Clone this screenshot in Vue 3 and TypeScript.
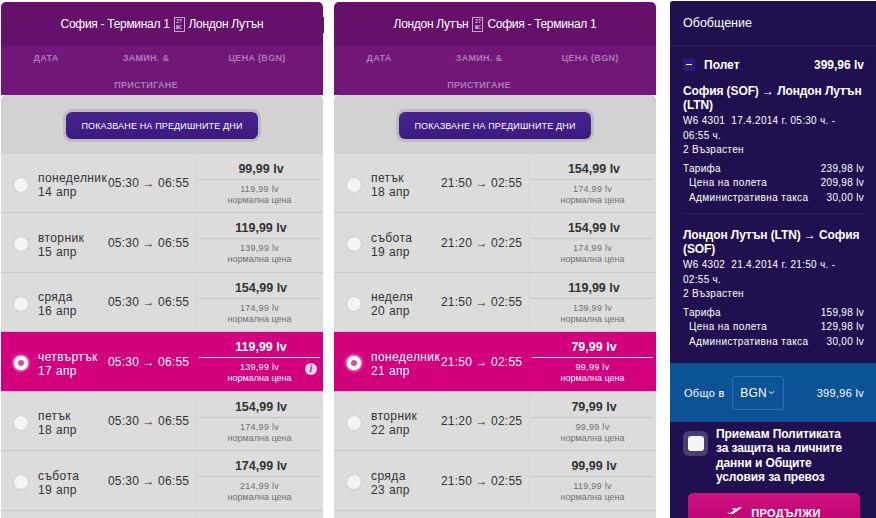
<script setup lang="ts">
interface Flight {
  day: string
  date: string
  dep: string
  arr: string
  price: string
  old: string
  selected?: boolean
  info?: boolean
}

interface Column {
  from: string
  to: string
  flights: Flight[]
}

const columns: Column[] = [
  {
    from: "София - Терминал 1",
    to: "Лондон Лутън",
    flights: [
      { day: "понеделник", date: "14 апр", dep: "05:30", arr: "06:55", price: "99,99", old: "119,99" },
      { day: "вторник", date: "15 апр", dep: "05:30", arr: "06:55", price: "119,99", old: "139,99" },
      { day: "сряда", date: "16 апр", dep: "05:30", arr: "06:55", price: "154,99", old: "174,99" },
      { day: "четвъртък", date: "17 апр", dep: "05:30", arr: "06:55", price: "119,99", old: "139,99", selected: true, info: true },
      { day: "петък", date: "18 апр", dep: "05:30", arr: "06:55", price: "154,99", old: "174,99" },
      { day: "събота", date: "19 апр", dep: "05:30", arr: "06:55", price: "174,99", old: "214,99" }
    ]
  },
  {
    from: "Лондон Лутън",
    to: "София - Терминал 1",
    flights: [
      { day: "петък", date: "18 апр", dep: "21:50", arr: "02:55", price: "154,99", old: "174,99" },
      { day: "събота", date: "19 апр", dep: "21:20", arr: "02:25", price: "154,99", old: "174,99" },
      { day: "неделя", date: "20 апр", dep: "21:50", arr: "02:55", price: "119,99", old: "139,99" },
      { day: "понеделник", date: "21 апр", dep: "21:50", arr: "02:55", price: "79,99", old: "99,99", selected: true },
      { day: "вторник", date: "22 апр", dep: "21:20", arr: "02:25", price: "79,99", old: "99,99" },
      { day: "сряда", date: "23 апр", dep: "21:50", arr: "02:55", price: "99,99", old: "119,99" }
    ]
  }
]

const legs = [
  {
    title: "София (SOF) → Лондон Лутън (LTN)",
    info: "W6 4301  17.4.2014 г. 05:30 ч. -\n06:55 ч.",
    fare: "239,98 lv",
    ticket: "209,98 lv"
  },
  {
    title: "Лондон Лутън (LTN) → София (SOF)",
    info: "W6 4302  21.4.2014 г. 21:50 ч. -\n02:55 ч.",
    fare: "159,98 lv",
    ticket: "129,98 lv"
  }
]
</script>

<template>
  <div class="page">
    <section v-for="col in columns" :key="col.from" class="column">
      <header class="route">
        <span>{{ col.from }}</span>
        <span class="missing">27<br />BC</span>
        <span>{{ col.to }}</span>
      </header>
      <div class="labels">
        <span>ДАТА</span>
        <span>ЗАМИН. &amp;</span>
        <span>ЦЕНА (BGN)</span>
        <span></span>
        <span>ПРИСТИГАНЕ</span>
      </div>
      <div class="panel">
        <div class="earlier">
          <button class="earlier-btn">ПОКАЗВАНЕ НА ПРЕДИШНИТЕ ДНИ</button>
        </div>
        <div
          v-for="f in col.flights"
          :key="f.date"
          class="row"
          :class="{ selected: f.selected }"
        >
          <span class="radio"><i v-if="f.selected"></i></span>
          <div class="date">{{ f.day }}<br />{{ f.date }}</div>
          <div class="times">{{ f.dep }} <span class="arrow">→</span> {{ f.arr }}</div>
          <div class="prices">
            <div class="price">{{ f.price }} lv</div>
            <div class="old">{{ f.old }} lv</div>
            <div class="normal">нормална цена</div>
            <span v-if="f.info" class="info">i</span>
          </div>
        </div>
        <!-- next row is cut off by the window -->
        <div class="row">
          <div class="row-spacer"></div>
          <div class="prices"></div>
        </div>
      </div>
    </section>

    <aside class="summary">
      <h2>Обобщение</h2>
      <div class="content">
        <div class="flight-head">
          <span class="toggle"></span>
          <span class="flight-name">Полет</span>
          <span>399,96 lv</span>
        </div>
        <div v-for="(leg, i) in legs" :key="leg.info" class="leg" :class="{ last: i === 1 }">
          <h3>{{ leg.title }}</h3>
          <p>{{ leg.info }}</p>
          <p>2 Възрастен</p>
          <div class="fees">
            <div class="fee"><span>Тарифа</span><span>{{ leg.fare }}</span></div>
            <div class="fee sub"><span>Цена на полета</span><span>{{ leg.ticket }}</span></div>
            <div class="fee sub"><span>Административна такса</span><span>30,00 lv</span></div>
          </div>
        </div>
      </div>
      <div class="total">
        <span>Общо в</span>
        <span class="currency">BGN<svg width="7" height="5" viewBox="0 0 7 5"><path d="M1 1.500l2.500 2 2.500-2" fill="none" stroke="#fff" stroke-width="1" /></svg></span>
        <span class="total-sum">399,96 lv</span>
      </div>
      <label class="terms">
        <span class="check"><i></i></span>
        <span>Приемам Политиката за защита на личните данни и Общите условия за превоз</span>
      </label>
      <button class="continue">
        <svg width="15" height="14" viewBox="0 0 15 14"><path d="M0 6.500l3 .5 8.500-5.500c1-.6 2.800-.8 3-.3s-.8 1.400-2 2.100L6 8H2.500zM4.500 2.500l1-.5 4 .8-2.300 1.300z" fill="#fff" /><rect x="1" y="12.500" width="12" height="1.500" fill="#fff" /></svg>
        ПРОДЪЛЖИ
      </button>
    </aside>
  </div>
</template>

<style scoped>
.page {
  display: flex;
  align-items: flex-start;
  width: 876px;
  height: 518px;
  overflow: hidden;
  padding: 2px 0 0 1px;
  box-sizing: border-box;
  background: #fff;
  font-family: "Liberation Sans", Arial, sans-serif;
}

.column {
  position: relative;
  flex: none;
  width: 322px;
  margin-right: 11px;
}

.column:first-child::after {
  content: "";
  position: absolute;
  top: 15px;
  right: -1px;
  width: 1px;
  height: 16px;
  background: #333;
}

.column:nth-child(2) {
  margin-right: 14px;
}

.route {
  display: flex;
  justify-content: center;
  align-items: center;
  gap: 4px;
  height: 44px;
  background: #65106a;
  border-radius: 5px 5px 0 0;
  color: #fff;
  font-size: 12px;
  letter-spacing: -0.3px;
}

.missing {
  width: 9px;
  height: 13px;
  border: 1px solid #c9a5cd;
  color: #fff;
  font-size: 5px;
  letter-spacing: 0;
  line-height: 6px;
  text-align: center;
  font-family: "DejaVu Sans Mono", monospace;
}

.labels {
  display: grid;
  grid-template-columns: 90px 110px 112px;
  grid-auto-rows: 27px;
  height: 49px;
  background: #72177a;
  color: #ad7ab3;
  font-size: 9px;
  font-weight: bold;
  letter-spacing: 0.3px;
  line-height: 25px;
  text-align: center;
}

.panel {
  background: #d2d2d2;
  border-radius: 5px 5px 0 0;
}

.earlier {
  display: flex;
  justify-content: center;
  height: 58.5px;
  padding-top: 17px;
  box-sizing: border-box;
}

.earlier-btn {
  width: 192px;
  height: 27px;
  padding: 0;
  border: 0;
  border-radius: 6px;
  background: linear-gradient(#47248f, #3b1a80);
  box-shadow: 0 0 0 3px #bcbcbc;
  color: #fff;
  font-family: inherit;
  font-size: 9px;
  letter-spacing: 0.15px;
}

.row {
  display: flex;
  align-items: center;
  height: 59.5px;
  box-sizing: border-box;
  padding-left: 13px;
  background: #dcdcdc;
  border-bottom: 1px solid #c8c8c8;
  color: #333;
}

.row.selected {
  background: #d3007d;
  border-bottom-color: #c8c8c8;
  color: #fff;
}

.row-spacer {
  flex: none;
  width: 182px;
}

.radio {
  flex: none;
  display: flex;
  justify-content: center;
  align-items: center;
  width: 14px;
  height: 14px;
  margin: 4px 10px 0 0;
  border-radius: 50%;
  background: #f4f4f4;
  box-shadow: 0 0 2px #bbb;
}

.selected .radio {
  background: #fff;
  box-shadow: 0 0 3px 1px #f3b5d7;
}

.radio i {
  width: 6px;
  height: 6px;
  border-radius: 50%;
  background: #dd4a9d;
}

.date {
  flex: none;
  width: 70px;
  margin-top: 5px;
  font-size: 12px;
  line-height: 14px;
  letter-spacing: 0.4px;
}

.times {
  flex: none;
  width: 88px;
  margin-top: 1px;
  font-size: 12px;
  letter-spacing: 0.2px;
  white-space: nowrap;
}

.arrow {
  letter-spacing: 0;
}

.prices {
  position: relative;
  flex: none;
  align-self: stretch;
  width: 124px;
  margin: 4px 0 5px;
  padding-left: 2px;
  box-sizing: border-box;
  border-left: 1px solid #d2d2d2;
  text-align: center;
}

.selected .prices {
  border-left-color: #d3007d;
}

.price {
  height: 21px;
  padding-left: 3px;
  border-bottom: 1px solid #c4c4c4;
  font-size: 12.500px;
  font-weight: bold;
  line-height: 23px;
}

.selected .price {
  border-bottom-color: #fff;
}

.old,
.normal {
  color: #707070;
  font-size: 9px;
  line-height: 11px;
}

.old {
  margin-top: 4px;
  letter-spacing: 0.3px;
}

.selected .old,
.selected .normal {
  color: #fff;
}

.info {
  position: absolute;
  top: 27px;
  right: 3px;
  width: 12px;
  height: 12px;
  border-radius: 50%;
  background: #f8d8ea;
  color: #d3007d;
  font-family: "Liberation Serif", serif;
  font-size: 10px;
  font-style: italic;
  font-weight: bold;
  line-height: 12px;
}

.summary {
  flex: none;
  align-self: flex-start;
  width: 206px;
  height: 560px;
  margin-top: -1px;
  background: #21104f;
  color: #fff;
  border-radius: 3px 0 0 0;
}

h2 {
  margin: 0;
  height: 44px;
  padding-left: 13px;
  border-bottom: 1px solid #2e2060;
  font-size: 12.500px;
  font-weight: normal;
  line-height: 44px;
}

.content {
  height: 317px;
  padding: 0 12px 0 13px;
}

.flight-head {
  display: flex;
  align-items: center;
  height: 38px;
  font-size: 12px;
  font-weight: bold;
}

.toggle {
  position: relative;
  width: 12px;
  height: 12px;
  margin-right: 9px;
  background: #2c1a78;
  border-radius: 2px;
}

.toggle::after {
  content: "";
  position: absolute;
  left: 3px;
  top: 5px;
  width: 6px;
  height: 1px;
  background: #fff;
}

.flight-name {
  flex: 1;
}

.leg {
  padding-bottom: 8px;
  margin-bottom: 14px;
  border-bottom: 1px solid #2e2060;
}

.leg.last {
  border-bottom: 0;
}

h3 {
  margin: 0 0 2px;
  font-size: 12px;
  letter-spacing: -0.1px;
  line-height: 14px;
}

.leg p {
  margin: 0;
  font-size: 10px;
  line-height: 14.500px;
  letter-spacing: 0.3px;
  white-space: pre-wrap;
}

.fees {
  margin-top: 4px;
}

.fee {
  display: flex;
  justify-content: space-between;
  font-size: 10px;
  line-height: 14.500px;
  letter-spacing: 0.3px;
}

.fee.sub {
  padding-left: 6px;
  letter-spacing: 0.4px;
}

.fee.sub span:last-child {
  letter-spacing: 0.3px;
}

.total {
  display: flex;
  align-items: center;
  height: 59px;
  padding: 0 12px 0 14px;
  background: #0c5296;
  font-size: 11px;
  letter-spacing: 0.3px;
}

.currency {
  display: flex;
  align-items: center;
  justify-content: center;
  gap: 1px;
  width: 50px;
  height: 32px;
  margin-left: 7px;
  border: 1px solid #2e70ab;
  border-radius: 3px;
  font-size: 12px;
}

.total-sum {
  margin-left: auto;
}

.terms {
  display: flex;
  padding: 5px 0 0 13px;
  font-size: 12px;
  font-weight: bold;
  letter-spacing: -0.1px;
  line-height: 14.300px;
}

.terms span:last-child {
  width: 130px;
}

.check {
  flex: none;
  display: flex;
  justify-content: center;
  align-items: center;
  width: 25px;
  height: 25px;
  margin: 4px 8px 0 0;
  border-radius: 6px;
  background: #4a3f73;
}

.check i {
  width: 16px;
  height: 15px;
  border-radius: 3px;
  background: #f5f5f5;
}

.continue {
  display: flex;
  align-items: center;
  justify-content: center;
  gap: 9px;
  width: 172px;
  height: 40px;
  margin: 9px 0 0 18px;
  padding: 0 0 1px;
  border: 0;
  border-radius: 5px;
  background: linear-gradient(#d1127f, #b5006d);
  color: #fff;
  font-family: inherit;
  font-size: 11px;
  font-weight: bold;
  letter-spacing: 0.4px;
}
</style>

<style>
html,
body {
  margin: 0;
  overflow: hidden;
  background: #fff;
}
</style>
